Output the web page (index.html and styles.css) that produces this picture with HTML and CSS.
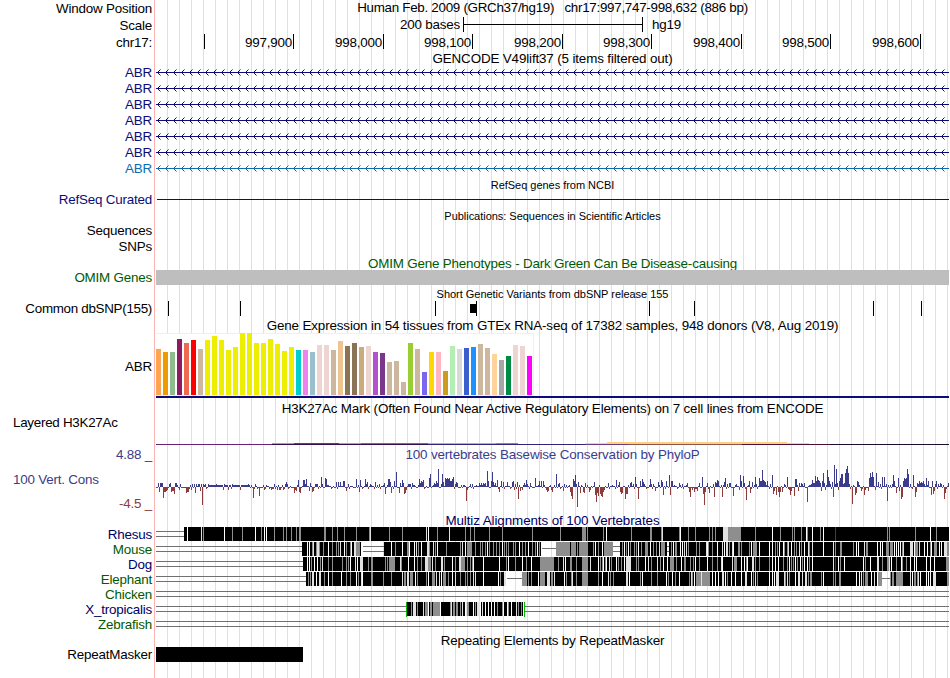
FILE: index.html
```html
<!doctype html>
<html lang="en">
<head>
    <meta charset="utf-8">
    <title>Human chr17:997,747-998,632 - Genome Browser</title>
    <link rel="stylesheet" href="styles.css">
</head>
<body>

<div class="browser">
    <div class="row h17">
        <div class="label">Window Position</div>
        <div class="plot title position">Human Feb. 2009 (GRCh37/hg19) &nbsp; chr17:997,747-998,632 (886 bp)</div>
    </div>
    <div class="row h17">
        <div class="label">Scale</div>
        <div class="plot scale">
            <span class="scale-size">200 bases</span>
            <span class="scale-bar"></span>
            <span class="scale-db">hg19</span>
        </div>
    </div>
    <div class="row h16 coords">
        <div class="label">chr17:</div>
        <div class="plot ruler">
            <span></span>
            <span>997,900</span>
            <span>998,000</span>
            <span>998,100</span>
            <span>998,200</span>
            <span>998,300</span>
            <span>998,400</span>
            <span>998,500</span>
            <span>998,600</span>
        </div>
    </div>

    <div class="row h14">
        <div class="label"></div>
        <div class="plot title">GENCODE V49lift37 (5 items filtered out)</div>
    </div>
    <div class="row h16 model navy"><div class="label">ABR</div><div class="plot gene"></div></div>
    <div class="row h16 model navy"><div class="label">ABR</div><div class="plot gene"></div></div>
    <div class="row h16 model navy"><div class="label">ABR</div><div class="plot gene"></div></div>
    <div class="row h16 model navy"><div class="label">ABR</div><div class="plot gene"></div></div>
    <div class="row h16 model navy"><div class="label">ABR</div><div class="plot gene"></div></div>
    <div class="row h16 model navy"><div class="label">ABR</div><div class="plot gene"></div></div>
    <div class="row h16 model blue"><div class="label">ABR</div><div class="plot gene"></div></div>

    <div class="row h16">
        <div class="label"></div>
        <div class="plot title small">RefSeq genes from NCBI</div>
    </div>
    <div class="row h15 navy">
        <div class="label">RefSeq Curated</div>
        <div class="plot"><div class="refseq-line"></div></div>
    </div>

    <div class="row h16">
        <div class="label"></div>
        <div class="plot title small">Publications: Sequences in Scientific Articles</div>
    </div>
    <div class="row h16"><div class="label">Sequences</div><div class="plot"></div></div>
    <div class="row h16"><div class="label">SNPs</div><div class="plot"></div></div>

    <div class="row h15 green">
        <div class="label"></div>
        <div class="plot title omim-title">OMIM Gene Phenotypes - Dark Green Can Be Disease-causing</div>
    </div>
    <div class="row h15 green">
        <div class="label">OMIM Genes</div>
        <div class="plot"><div class="omim-bar"></div></div>
    </div>

    <div class="row h16">
        <div class="label"></div>
        <div class="plot title small">Short Genetic Variants from dbSNP release 155</div>
    </div>
    <div class="row h15">
        <div class="label snp-label">Common dbSNP(155)</div>
        <div class="plot" id="snps"></div>
    </div>

    <div class="row h17">
        <div class="label"></div>
        <div class="plot title">Gene Expression in 54 tissues from GTEx RNA-seq of 17382 samples, 948 donors (V8, Aug 2019)</div>
    </div>
    <div class="row h65">
        <div class="label">ABR</div>
        <div class="plot gtex">
            <div class="gtex-bars" id="gtex"></div>
        </div>
    </div>

    <div class="row h17">
        <div class="label"></div>
        <div class="plot title h3k-title">H3K27Ac Mark (Often Found Near Active Regulatory Elements) on 7 cell lines from ENCODE</div>
    </div>
    <div class="row h31">
        <div class="label left">Layered H3K27Ac</div>
        <div class="plot" id="h3k"></div>
    </div>

    <div class="row h66">
        <div class="label cons-label">
            <span class="cons">4.88 _</span>
            <span class="cons name">100 Vert. Cons</span>
            <span class="cons low">-4.5 _</span>
        </div>
        <div class="plot phylop">
            <div class="title cons">100 vertebrates Basewise Conservation by PhyloP</div>
            <div id="phylop"></div>
        </div>
    </div>

    <div class="row h15 dark">
        <div class="label"></div>
        <div class="plot title multiz-title">Multiz Alignments of 100 Vertebrates</div>
    </div>
    <div class="row h15 dark"><div class="label">Rhesus</div><div class="plot align" data-species="rhesus"></div></div>
    <div class="row h15 green"><div class="label">Mouse</div><div class="plot align" data-species="mouse"></div></div>
    <div class="row h15 dark"><div class="label">Dog</div><div class="plot align" data-species="dog"></div></div>
    <div class="row h15 green"><div class="label">Elephant</div><div class="plot align" data-species="elephant"></div></div>
    <div class="row h15 green"><div class="label">Chicken</div><div class="plot align" data-species="chicken"></div></div>
    <div class="row h15 dark"><div class="label">X_tropicalis</div><div class="plot align" data-species="frog"></div></div>
    <div class="row h15 green"><div class="label">Zebrafish</div><div class="plot align" data-species="zebrafish"></div></div>

    <div class="row h15">
        <div class="label"></div>
        <div class="plot title repeat-title">Repeating Elements by RepeatMasker</div>
    </div>
    <div class="row h15">
        <div class="label">RepeatMasker</div>
        <div class="plot"><div class="repeat"></div></div>
    </div>
    <div class="row h16"><div class="label"></div><div class="plot"></div></div>
</div>

<script src="tracks.js"></script>
</body>
</html>
```

FILE: styles.css
```css
body {
    margin: 0;
    background: #fff;
    font-family: "Liberation Sans", Arial, sans-serif;
    font-size: 13.4px;
    letter-spacing: -0.2px;
    color: #000;
    overflow: hidden;
}

.browser {
    width: 949px;
}

.row {
    display: grid;
    grid-template-columns: 155px 793px;
    grid-template-rows: 100%;
    column-gap: 1px;
    white-space: nowrap;
}

.h14 { height: 14px; line-height: 16px; }
.h15 { height: 15px; line-height: 15px; }
.h16 { height: 16px; line-height: 16px; }
.h17 { height: 17px; line-height: 17px; }
.h31 { height: 31px; line-height: 16px; }
.h65 { height: 65px; line-height: 67px; }
.h66 { height: 66px; line-height: 16px; }

.navy { color: #0c0c78; }
.dark { color: #000064; }
.blue { color: #0c6cb0; }
.green { color: #005a00; }

.label {
    box-sizing: border-box;
    padding-right: 2px;
    border-right: 1px solid #ffb4b4;
    text-align: right;
}

.label.left {
    padding-left: 13px;
    text-align: left;
    letter-spacing: -0.27px;
}

.snp-label {
    letter-spacing: -0.3px;
}

.plot {
    min-width: 0;
    background: repeating-linear-gradient(to right, transparent 0 11px, #dcdcff 11px 12px);
}

.plot svg {
    display: block;
}

.title {
    text-align: center;
    letter-spacing: -0.14px;
}

.h14 .title, .h15 .title { line-height: 17px; }
.h17 .title { line-height: 19px; }

.h17 .position {
    line-height: 16px;
    letter-spacing: -0.29px;
}

.h17 .h3k-title { line-height: 21px; }
.h15 .omim-title { letter-spacing: -0.19px; }
.h15 .multiz-title { letter-spacing: -0.09px; }
.h15 .repeat-title { letter-spacing: -0.17px; }

.small {
    font-size: 11px;
    line-height: 18px;
    letter-spacing: -0.03px;
}

/* scale and coordinates */
.scale {
    display: flex;
    line-height: 16px;
}

.scale-size {
    width: 304px;
    text-align: right;
}

.scale-bar {
    box-sizing: border-box;
    width: 180px;
    height: 15px;
    margin: 0 9px 0 3px;
    border: solid #000;
    border-width: 0 1px;
    background: linear-gradient(#000, #000) 0 7px / 100% 1px no-repeat;
}

.coords, .model {
    line-height: 17px;
}

.ruler {
    display: grid;
    grid-template-columns: 49px 89px 90px 89px 90px 89px 90px 89px 90px;
}

.ruler span {
    height: 15px;
    padding-right: 1px;
    border-right: 1px solid #000;
    text-align: right;
}

/* simple tracks */
.refseq-line {
    height: 1px;
    margin: 7px 0 0 1px;
    background: #0c0c78;
}

.omim-bar {
    height: 15px;
    background: #bebebe;
}

.repeat {
    width: 147px;
    height: 15px;
    background: #000;
}

.gtex {
    box-sizing: border-box;
    border-bottom: 2px solid #0c0c78;
    height: 65px;
}

.gtex-bars {
    box-sizing: border-box;
    display: flex;
    align-items: flex-end;
    gap: 2px;
    width: 378px;
    height: 63px;
    border: solid #f0f0f0;
    border-width: 1px 1px 1px 0;
    background: #fff;
}

.gtex-bars i {
    width: 5px;
    flex: none;
}

/* conservation */
.cons {
    color: #3c3c8c;
}

.cons-label {
    display: flex;
    flex-direction: column;
    justify-content: space-between;
    line-height: 17px;
}

.cons-label .name {
    padding-left: 13px;
    text-align: left;
}

.cons-label .low {
    color: #8c3c3c;
}

.phylop .title {
    height: 16px;
    line-height: 18px;
}
```

FILE: tracks.js
```js
const NS = 'http://www.w3.org/2000/svg';
const LEFT = 156, WIDTH = 793;

function makeSvg(parent, height) {
    const svg = document.createElementNS(NS, 'svg');
    svg.setAttribute('width', WIDTH);
    svg.setAttribute('height', height);
    parent.appendChild(svg);
    return svg;
}

function rect(svg, x, y, w, h, fill) {
    const r = document.createElementNS(NS, 'rect');
    r.setAttribute('x', x - LEFT);
    r.setAttribute('y', y);
    r.setAttribute('width', w);
    r.setAttribute('height', h);
    r.setAttribute('fill', fill);
    svg.appendChild(r);
}

// Gene models: intron line with strand arrows
document.querySelectorAll('.gene').forEach(el => {
    const svg = makeSvg(el, 16);
    rect(svg, LEFT, 8, WIDTH, 1, 'currentColor');
    let d = '';
    for (let x = 1.5; x < WIDTH; x += 8) {
        d += `M${x + 3} 5.5L${x} 8.5L${x + 3} 11.5`;
    }
    const path = document.createElementNS(NS, 'path');
    path.setAttribute('d', d);
    path.setAttribute('fill', 'none');
    path.setAttribute('stroke', 'currentColor');
    svg.appendChild(path);
});

// Common SNPs
const snps = makeSvg(document.getElementById('snps'), 15);
[168, 240, 435, 476, 649, 694, 873, 921].forEach(x => rect(snps, x, 0, 1, 15, '#000'));
rect(snps, 470, 3, 6, 9, '#000');

// GTEx: color and bar height per tissue
const tissues = `ffa54f 46,ee9a00 43,8fbc8f 43,8b1c62 56,ee6a50 52,ff0000 55,cdb79e 46,eeee00 55,eeee00 59,
eeee00 55,eeee00 45,eeee00 48,eeee00 62,eeee00 62,eeee00 52,eeee00 52,eeee00 56,eeee00 51,eeee00 44,eeee00 48,
00cdcd 45,ee82ee 45,9ac0cd 43,eed5d2 50,eed5d2 50,cdb79e 45,eec591 54,8b7355 49,8b7355 52,cdaa7d 48,eed5d2 49,
b452cd 43,7a378b 42,cdb79e 33,cdb79e 34,cdb79e 13,9acd32 52,cdb79e 46,7a67ee 23,ffd700 43,ffb6c1 43,cd9b1d 24,
b4eeb4 49,d9d9d9 46,3a5fcd 47,1e90ff 48,cdb79e 51,cdb79e 47,ffd39b 41,a6a6a6 35,008b45 39,eed5d2 50,eed5d2 49,
ff00ff 39`;
tissues.split(',').forEach(t => {
    const [color, height] = t.trim().split(' ');
    const bar = document.createElement('i');
    bar.style.background = '#' + color;
    bar.style.height = height + 'px';
    document.getElementById('gtex').appendChild(bar);
});

// H3K27Ac: [start, end, top, height, color]
const h3k = makeSvg(document.getElementById('h3k'), 31);
[
    [156, 272, 29, 1, '#6b2178'], [272, 428, 29, 1, '#35104f'], [428, 585, 29, 1, '#33237f'],
    [585, 628, 29, 1, '#6a3a83'], [628, 742, 29, 1, '#85564a'], [742, 830, 29, 1, '#4a1034'],
    [830, 949, 29, 1, '#1c0c2c'],
    [249, 250, 28, 1, '#ddb6d0'], [272, 294, 28, 1, '#ee8585'], [294, 339, 28, 1, '#6b3580'],
    [339, 361, 28, 1, '#ee8585'], [361, 428, 28, 1, '#806a80'], [428, 496, 28, 1, '#84bdea'],
    [496, 518, 28, 1, '#719a78'], [585, 607, 28, 1, '#ffd080'], [607, 787, 27, 2, '#ffd080'],
    [787, 809, 28, 1, '#ffd080']
].forEach(([a, b, y, h, c]) => rect(h3k, a, y, b - a, h, c));

// PhyloP scores, "position:score" in pixels
const scores = `158:4 159:-5 160:4 161:4 162:4 163:-11 164:-5 165:-5 166:-4 167:-3 170:4 171:-5 172:-4 173:-4 174:-7
175:4 176:4 179:-3 180:3 181:-1 182:-1 183:-1 184:-1 185:-1 186:-6 187:-5 188:-5 189:-2 190:2 191:-3 192:3 193:-1
194:3 195:-6 196:3 198:3 199:3 200:-4 201:3 202:-18 203:3 205:3 206:-2 207:-1 223:-3 228:-3 231:-2 240:-3
253:-11 254:-2 259:-9 264:-3 265:-2 271:-3 272:-2 273:-2 277:-3 279:-3 280:-3 283:-3 284:-2 285:3 286:5 287:3
294:-6 295:-3 296:-4 298:7 299:-5 300:-6 303:7 304:7 305:3 306:8 309:-4 310:4 312:-5 313:-4 315:3 316:3 321:10
322:3 325:9 326:8 336:5 338:5 340:5 343:6 344:6 346:-4 356:8 359:-5 360:7 365:8 366:3 367:5 370:3 375:5
384:4 385:-7 388:8 389:8 390:5 391:-6 394:6 396:15 399:-6 400:4 402:7 403:4 404:-7 405:-6 406:-3 408:3 409:3
410:3 412:4 413:2 419:8 420:4 421:6 422:5 423:7 429:9 430:13 434:4 435:3 436:6 437:4 438:18 442:13 443:5
445:9 446:8 447:9 448:8 449:9 450:6 451:6 452:8 453:10 455:3 456:5 457:4 466:-14 467:-3 470:3 479:4 481:4
483:4 485:4 487:16 488:6 491:6 492:15 493:5 495:4 497:7 499:-5 501:6 503:5 507:5 512:5 513:6 514:-3 517:5
518:-12 520:-4 522:-3 524:4 526:7 530:4 535:9 539:6 541:6 543:6 546:-3 547:-5 548:-4 551:-3 552:-5 556:13
559:4 563:-4 564:3 570:-5 571:-9 572:-12 573:8 574:6 575:12 576:3 577:-20 578:5 580:-6 583:-5 584:-6 585:4
589:-5 590:-3 594:5 595:-8 596:-15 597:-6 598:-9 600:-7 601:-9 602:-10 603:-5 604:-3 608:4 616:7 619:5
620:-5 621:-7 622:-6 625:-12 626:-7 627:-7 630:4 631:5 633:3 635:10 636:3 638:-12 640:6 642:8 643:5 644:3
650:8 653:3 655:-4 658:5 661:7 662:5 663:-8 666:6 669:12 670:-8 671:6 672:6 679:4 687:4 689:-5 690:-10
692:-3 694:-5 697:-4 699:4 702:10 703:-7 704:-18 705:-5 707:4 709:-6 714:-10 715:5 716:4 717:7 718:6 722:-10
724:5 725:9 727:3 729:4 730:4 733:-9 736:3 739:-3 740:12 741:6 743:11 744:4 746:-13 749:6 750:-6 752:5 755:10
759:9 760:6 761:6 762:17 763:7 764:6 765:5 767:6 769:-2 770:3 772:12 773:-7 774:-4 776:-8 778:-5 779:-10 780:-5
782:-5 784:3 787:10 789:-3 790:-8 791:-4 794:-9 795:8 796:8 798:-4 799:4 801:4 802:3 804:4 807:-15 809:2
810:2 811:3 812:7 813:4 814:4 815:11 816:6 817:10 818:7 819:6 820:4 821:-4 822:6 823:14 824:4 825:-3 827:17
828:10 829:6 830:3 832:5 833:-10 834:22 835:3 836:18 837:4 838:-3 839:6 840:9 841:13 842:13 843:3 844:4 845:14
846:18 847:21 848:14 852:-17 855:-8 856:-6 857:6 858:5 861:-4 864:-8 865:-3 868:-4 869:9 870:14 871:10 872:15
873:10 875:-3 876:14 878:5 882:10 884:10 886:3 887:-14 893:12 894:6 896:-6 898:9 899:-4 901:-12 902:-10 903:6
904:9 905:8 906:9 907:18 908:13 910:3 913:12 915:-10 916:-5 917:4 918:3 919:6 920:4 921:5 922:4 923:6 924:3
926:9 928:6 931:-8 932:6 933:-7 934:-4 936:6 938:3 940:4 941:3 944:-12 945:-6 946:-2 948:4`;
const byPos = {};
scores.split(/\s+/).forEach(s => {
    const [x, v] = s.split(':');
    byPos[x] = +v;
});
const background = [2, 1, -1, 2, -2, 1, -1, -1, 2, 1, -1, 1, -2, -1, 3, 1, -1];
const phylop = makeSvg(document.getElementById('phylop'), 50);
for (let x = LEFT; x < LEFT + WIDTH; x++) {
    let v = byPos[x];
    if (v === undefined) {
        v = background[(x * 7 + (x >> 3)) % background.length];
        if (x > 207 && x < 250) v = x % 8 ? 2 : 3;
    }
    rect(phylop, x, v > 0 ? 25 - v : 25, 1, Math.abs(v), v > 0 ? '#3c3c8c' : '#8c3c3c');
}

// Alignments. Stripes are "<shade><x>[+width]": g = mismatch, l = weak, w = none, d = dark.
// gaps: [start, end, number of lines]
const alignments = {
    rhesus: {
        blocks: [[184, 949]],
        gaps: [[156, 184, 2]],
        stripes: `w187 l201 g203 w224 g232 g242 w255 g261 w264 w266 g274 g283 g286 g291 g296 g299+2 g324+2 g332 g337
            g344 g356 g369 l370 g389 g402 l426 w428 g437 l449 g465 g470 g474 g489 g502 g532 g560 g582+4 g587 g603
            w606 g631 g650+2 g661 l662 g679 w680 g688 g695 g709 g712 g715 l723+5 g728+13 g755 w772 g780 g792 g794
            g801 w806 g807 w812 g820 w823 d835 g887 g889 g915 w930 g936`
    },
    mouse: {
        blocks: [[302, 362], [384, 541], [556, 613], [620, 667], [669, 949]],
        gaps: [[156, 302, 2], [363, 384, 2], [542, 556, 1], [613, 620, 2], [667, 669, 2]],
        stripes: `w307 w309 g312 l313 g316 l317+2 g319 g323 w328 g332 g336 g338 l340 w344 g346 g350 w351 l354 l355
            g356+4 w361 w391 g395 w402 g407+2 w409 w414 l416 g418 w421 l427+2 g429 l433 g435 w437 g446 g460 l462
            w465 g467+5 g475 g480 g482 g485 w487 g489 g493 g496 g499 w502 g504 g506 g508 g513 g515 w519 g522 g525
            w528 g532 g535 w537 g539 g556+14 g571+5 g577 g579+9 g593 w595 g598 w602 g604+5 g609+4 g622 w624 g626
            w628 g630 g634 g636 w638 g641 g645+3 w650 g653 g656 l659 g661+4 g671 w673 g675+2 w680 w682 l684 l686
            g688 g696 g699 l706 w707 g708 g712 w717 l722 w724 l726 l727 g729 l732 w733 g738+2 g741 g749 w751
            g753+4 w759 w769 w772 g775 g777 w779 w783 g784 g787 l788 w791 g794 g796 l799 g801 w804 l808 g809
            l812 w823 l833 g835 g840+2 g853 w856 w858 l864 g866+2 w877 w880 w882 g886+3 g890+3 w894 w896 w898
            w900 g902 l903 l910+3 w914 g915+3 l919 w924 w927 g930 w931 g934+3 w939 w941 l944+3 g947+2`
    },
    dog: {
        blocks: [[303, 949]],
        gaps: [[156, 303, 2]],
        stripes: `w307 w309 g311 w314 w317 g320 l322 g328 g332 g342 g346 g348 w350 l355 w357 l360+3 g368 g371+2 g385
            g387 g389+6 l400 g401 w408 w414 g417 g421 l425+3 g428+3 l432 g435 l441+2 g444 w452 g455 l459+2
            g461+4 g467 g470 g472 w473 w483 w499 g506 w508 g515 w522 g526 w531 g540+14 g558 l563 w565 g570+2
            g576 g582+6 l590 w598 g600 g602 w603 g605 w606 l609 g611 w616 g618 g621 w624 l626+5 g636 g638 w645
            l648 g651 l657 g660 w663 w667 g670+4 g676 w681 g684+2 g690 g693 w695 g699 w707 g712 g717 l721 w722
            l732 g734+3 w741 w744 g746 w747 l752+2 g755 g759 g769 w772 w775 w778 g783 g787 w789 g791 g793 w795
            g797 w800 g802 w804 w807 g809 w812 l833 d835 w838 g840 w844 w863 g865 w870 l877+2 g882 g887+2 l889
            w891 g896 w901 g902 g906 w910 w914 w916 w926 w930 w934 g946+3`
    },
    elephant: {
        blocks: [[306, 506], [522, 882], [890, 949]],
        gaps: [[156, 306, 2], [507, 522, 1], [882, 890, 1]],
        stripes: `g308 g310 l312+2 w316 l319+2 g324 w328 g332 w341 g346 g350 w356 g358 l361 w362 g371+2 g383 g391
            l402 g404+2 l407+2 g410+3 w415 g417 g426 w428 g432+3 l436 l439 w441 g443+3 g448 w452 l455 g460 g465
            g467 g470 l473 l475 w483 w498 g500 l504+2 g522+5 g528 g531 w538 g540+5 l547+3 g551+2 l554 w564 g566
            g571 l572 g576 g582+6 g598 w602 l608 g610 g613 l626+2 w629 g640 w642 g651 g657 w666 g668 w672 g675
            w679 g689 l691 g692 w694 g696+5 l701 g702+8 w712 w715 w718 l722+2 w725 g727 w731 w735 w741 l745+2
            w751 g753 l755 g757 w769 w772 w774 l776+3 l784 g785 l787 g789 w795 l798+2 l802 l805+2 g808 g810+2
            g821 w823 g833 g835 g839+2 w856 w859 l861 g863 g865+3 w871 l874 w877 g878+4 g890 g892+2 g896+7
            l910 w912 g914+2 g917 l918 w920 w926 w928 w930 l933+3 g947+2`
    },
    chicken: { blocks: [], gaps: [[156, 949, 2]], stripes: '' },
    frog: {
        blocks: [[407, 524]],
        gaps: [[156, 406, 2], [525, 949, 2]],
        stripes: `g411 l413+3 g417 l423 g425+3 w428 g430+2 g433+7 w440 g450 l451 g453+2 g456+2 g460 l462 w465 l466
            g467+2 w473 g475 l477+3 w480 l482 w485 w488 w491 w494 g497 g502 w503 w507 g508 w511 l516 g518 g521
            w523`,
        brackets: [406, 524]
    },
    zebrafish: { blocks: [], gaps: [[156, 949, 2]], stripes: '' }
};
const shades = { g: '#8e8e8e', l: '#e1e1e1', w: '#fff', d: '#404040' };

document.querySelectorAll('.align').forEach(el => {
    const a = alignments[el.dataset.species];
    const svg = makeSvg(el, 15);
    a.gaps.forEach(([from, to, lines]) => {
        (lines === 2 ? [4, 9] : [6]).forEach(y => rect(svg, from, y, to - from, 1, '#707070'));
    });
    a.blocks.forEach(([from, to]) => rect(svg, from, 0, to - from, 14, '#000'));
    (a.stripes.match(/\S+/g) || []).forEach(s => {
        const [x, w] = s.slice(1).split('+');
        rect(svg, +x, 0, +(w || 1), 14, shades[s[0]]);
    });
    if (a.brackets) {
        rect(svg, a.brackets[0], 0, 1, 15, '#00c000');
        rect(svg, a.brackets[1], 0, 1, 15, '#00c000');
    }
});
```
